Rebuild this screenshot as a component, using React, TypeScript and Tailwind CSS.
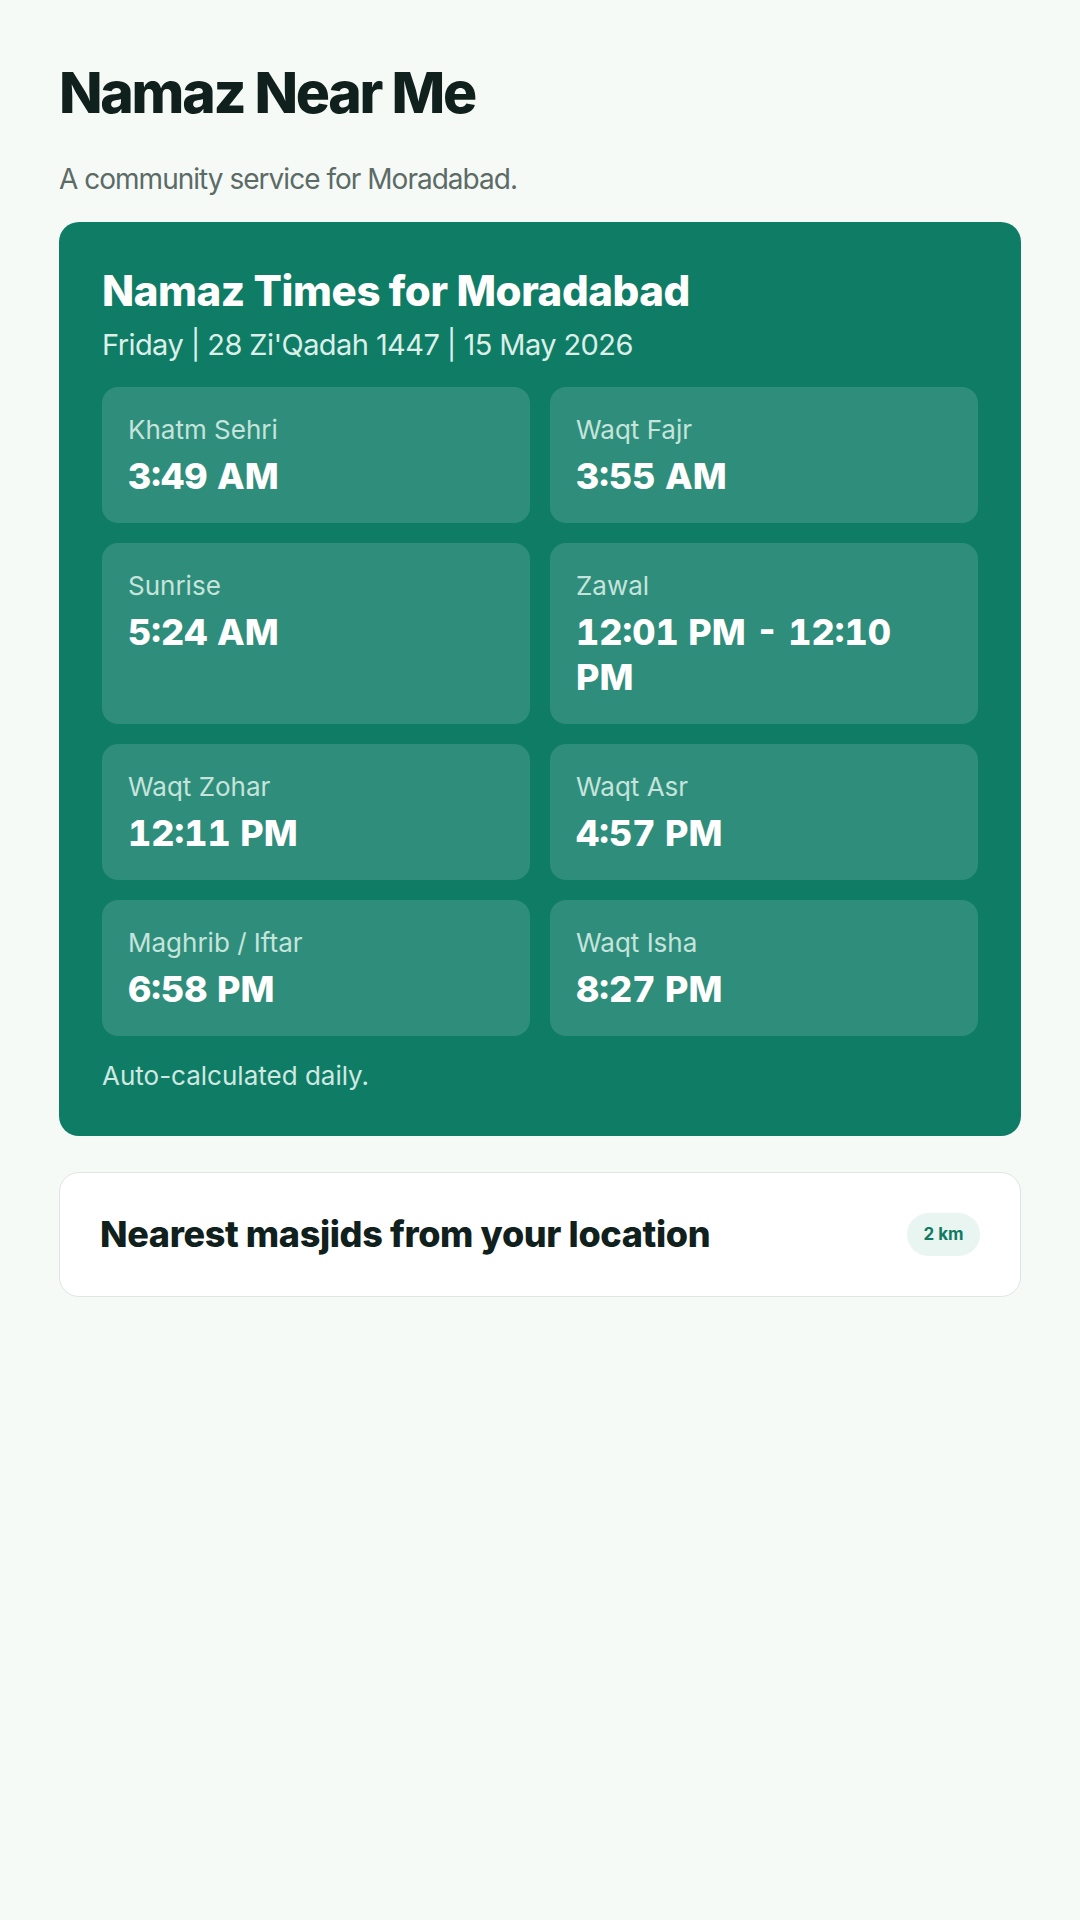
import React from "react";

const times: { label: string; value: string }[] = [
  { label: "Khatm Sehri", value: "3:49 AM" },
  { label: "Waqt Fajr", value: "3:55 AM" },
  { label: "Sunrise", value: "5:24 AM" },
  { label: "Zawal", value: "12:01 PM - 12:10 PM" },
  { label: "Waqt Zohar", value: "12:11 PM" },
  { label: "Waqt Asr", value: "4:57 PM" },
  { label: "Maghrib / Iftar", value: "6:58 PM" },
  { label: "Waqt Isha", value: "8:27 PM" },
];

export default function App() {
  return (
    <div
      className="min-h-[1920px] w-full bg-[#f5faf7] px-[59px] pt-[61px] text-[#10201c]"
      style={{ fontFamily: "Inter, 'Noto Sans', sans-serif" }}
    >
      <h1 className="text-[57px] font-extrabold leading-[63px] tracking-[-0.04em] text-[#10201c]">
        Namaz Near Me
      </h1>
      <p className="mt-[34px] text-[28px] leading-[42px] tracking-[-0.035em] text-[#5c6b66]">
        A community service for Moradabad.
      </p>

      <section className="mt-[22px] rounded-[20px] bg-[#0f7c66] p-[43px] text-white">
        <h2 className="text-[42px] font-extrabold leading-[52px] tracking-[-0.01em]">
          Namaz Times for Moradabad
        </h2>
        <p className="mt-[8px] text-[29px] leading-[40px] tracking-[-0.02em] text-[#dcefe9]">
          Friday | 28 Zi'Qadah 1447 | 15 May 2026
        </p>

        <div className="mt-[22px] grid grid-cols-2 gap-[20px]">
          {times.map((t) => (
            <div
              key={t.label}
              className="rounded-[16px] bg-[#2f8e7b] px-[26px] py-[24px]"
            >
              <div className="text-[26px] leading-[38px] text-[#c6e4dc]">
                {t.label}
              </div>
              <div className="mt-[5px] text-[36px] font-extrabold leading-[45px] tabular-nums text-white">
                {t.value}
              </div>
            </div>
          ))}
        </div>

        <p className="mt-[23px] text-[26px] leading-[34px] text-[#cfe8e1]">
          Auto-calculated daily.
        </p>
      </section>

      <section className="mt-[36px] flex items-center justify-between rounded-[20px] border border-[#dde6e2] bg-white px-[40px] py-[40px]">
        <h3 className="text-[36px] font-extrabold leading-[43px] tracking-[-0.01em] text-[#10201c]">
          Nearest masjids from your location
        </h3>
        <span className="flex h-[43px] w-[73px] items-center justify-center rounded-full bg-[#e8f5f0] text-[17px] font-bold text-[#127a63]">
          2 km
        </span>
      </section>
    </div>
  );
}
